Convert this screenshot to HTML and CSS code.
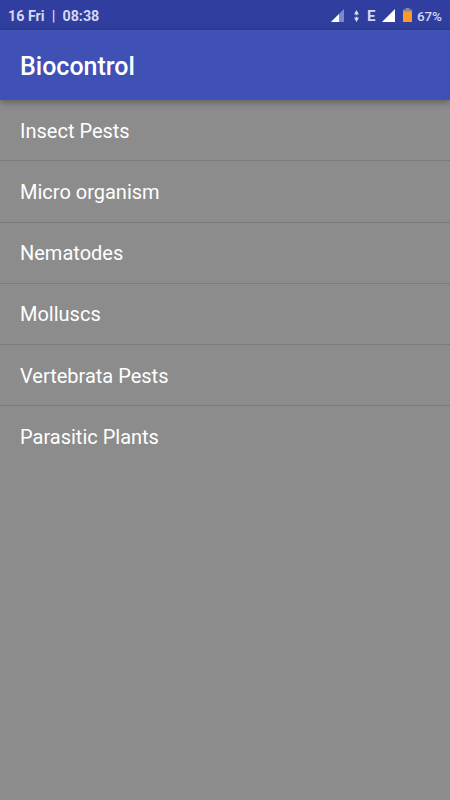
FILE: index.html
```html
<!DOCTYPE html>
<html lang="en">
<head>
<meta charset="utf-8">
<title>Biocontrol</title>
<link rel="stylesheet" href="styles.css">
</head>
<body>
<div class="status">
  <span class="clock">16 Fri&nbsp; |&nbsp; 08:38</span>
  <svg class="signal-weak" width="13" height="13" viewBox="0 0 13 13"><path d="M13 0V13H0z" fill="#7f88c6"/><path d="M8 5V13H0z" fill="#fff"/></svg>
  <svg class="arrows" width="5" height="12" viewBox="0 0 5 12"><path d="M2.500 0L5 4.200H3.300V5.300H1.700V4.200H0zM1.700 6.700H3.300V7.800H5L2.500 12L0 7.800H1.700z" fill="#d4d7ed"/></svg>
  <span class="network">E</span>
  <svg class="signal" width="13" height="13" viewBox="0 0 13 13"><path d="M13 0V13H0z" fill="#fff"/></svg>
  <svg class="battery" width="9" height="14" viewBox="0 0 9 14"><path d="M2.500 0h4v1.500H9V4H0V1.500h2.500z" fill="#8f86a3"/><path d="M0 3.500h9V14H0z" fill="#fb9b26"/></svg>
  <span class="percent">67%</span>
</div>
<header class="appbar"><h1>Biocontrol</h1></header>
<ul class="list">
  <li>Insect Pests</li>
  <li>Micro organism</li>
  <li>Nematodes</li>
  <li>Molluscs</li>
  <li>Vertebrata Pests</li>
  <li>Parasitic Plants</li>
</ul>
</body>
</html>
```
FILE: styles.css
```css
* { box-sizing: border-box; }
body { margin: 0; height: 800px; overflow: hidden; background: #8c8c8c; color: #fff; font-family: Roboto, sans-serif; }
.status { display: flex; align-items: center; height: 30px; padding: 1px 8px 0; background: #303f9f; color: #d3d8f3; font-size: 14px; font-weight: 700; }
.clock { margin-right: auto; font-size: 14.300px; }
.arrows { margin-left: 10px; }
.network { width: 9px; margin-left: 8px; font-size: 15px; }
.signal { margin-left: 6px; }
.battery { margin-left: 8px; margin-top: -2px; }
.percent { width: 25px; margin-left: 5px; font-size: 13.500px; font-weight: 500; letter-spacing: -.2px; }
.appbar { position: relative; display: flex; align-items: center; height: 70px; padding: 3px 20px 0; background: #3f51b5; box-shadow: 0 2px 7px rgba(0, 0, 0, .35); }
h1 { margin: 0; font-size: 25px; font-weight: 500; }
.list { margin: 0; padding: 0; list-style: none; }
.list li { display: flex; align-items: center; height: 61.250px; padding: 1px 20px 0; border-bottom: 1px solid #7b7b7b; font-size: 20px; }
.list li:last-child { border-bottom: 0; }
```
